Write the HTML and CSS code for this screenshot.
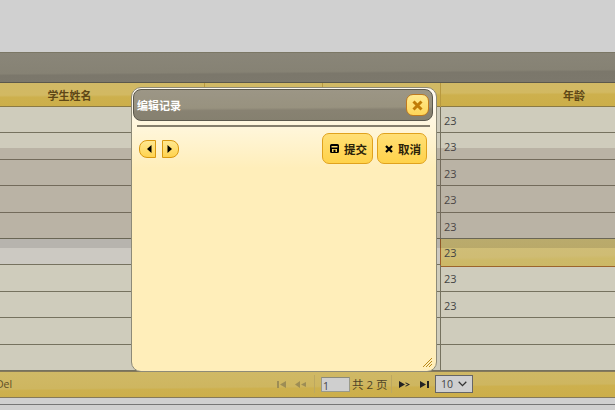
FILE: index.html
```html
<!DOCTYPE html>
<html lang="zh">
<head>
<meta charset="utf-8">
<title>编辑记录</title>
<link rel="stylesheet" href="styles.css">
</head>
<body>
<div class="page">
  <div class="caption"></div>
  <div class="grid">
    <div class="head">
      <div class="hcell name">学生姓名</div>
      <div class="hcell"></div>
      <div class="hcell"></div>
      <div class="hcell age">年龄</div>
    </div>
    <div class="row"><div></div><div></div><div></div><div class="num">23</div></div>
    <div class="row"><div></div><div></div><div></div><div class="num">23</div></div>
    <div class="row"><div></div><div></div><div></div><div class="num">23</div></div>
    <div class="row"><div></div><div></div><div></div><div class="num">23</div></div>
    <div class="row"><div></div><div></div><div></div><div class="num">23</div></div>
    <div class="row selected"><div></div><div></div><div></div><div class="num">23</div></div>
    <div class="row"><div></div><div></div><div></div><div class="num">23</div></div>
    <div class="row"><div></div><div></div><div></div><div class="num">23</div></div>
    <div class="row"><div></div><div></div><div></div><div class="num"></div></div>
    <div class="row"><div></div><div></div><div></div><div class="num"></div></div>
  </div>
  <div class="pager">
    <span class="del">Del</span>
    <div class="pgroup">
      <svg class="pico dim" width="9" height="7" viewBox="0 0 9 7"><path d="M0 0h2v7H0zM9 0v7L3 3.500z"/></svg>
      <svg class="pico dim prev" width="11" height="7" viewBox="0 0 11 7"><path d="M5 0v7L0 3.500zM11 1v5L6 3.500z"/></svg>
      <span class="sep first"></span>
      <input class="pageinput" value="1">
      <span class="ptext">共 2 页</span>
      <span class="sep"></span>
      <svg class="pico next" width="11" height="7" viewBox="0 0 11 7"><path d="M0 0l6 3.500L0 7zM6.500 1.200L11 3.500 6.500 5.800V4.800L9 3.500 6.500 2.200z"/></svg>
      <svg class="pico last" width="9" height="7" viewBox="0 0 9 7"><path d="M0 0l6 3.500L0 7zM7 0h2v7H7z"/></svg>
      <div class="select"><span>10</span>
        <svg width="9" height="6" viewBox="0 0 9 6"><path d="M.7.8l3.800 3.800L8.300.8" fill="none" stroke="#333" stroke-width="1.300"/></svg>
      </div>
    </div>
  </div>
  <div class="foot"></div>
</div>
<div class="band"></div>
<div class="band2"></div>
<div class="modal">
  <div class="mtitle">
    <span>编辑记录</span>
    <button class="close" type="button" aria-label="关闭">
      <svg width="11" height="11" viewBox="0 0 11 11"><path d="M1.500 1.500l8 8M9.500 1.500l-8 8" stroke="#c07c08" stroke-width="3"/></svg>
    </button>
  </div>
  <div class="rule"></div>
  <div class="toolbar">
    <div class="navs">
      <button class="nav left" type="button" aria-label="上一条"><svg width="5" height="8" viewBox="0 0 5 8"><path d="M4.500 0v8L0 4z"/></svg></button>
      <button class="nav right" type="button" aria-label="下一条"><svg width="5" height="8" viewBox="0 0 5 8"><path d="M.5 0v8L5 4z"/></svg></button>
    </div>
    <div class="actions">
      <button class="act submit" type="button"><svg width="9" height="9" viewBox="0 0 9 9"><path fill-rule="evenodd" d="M1.500 0h6A1.500 1.500 0 0 1 9 1.500V7.500A1.500 1.500 0 0 1 7.500 9h-6A1.500 1.500 0 0 1 0 7.500V1.500A1.500 1.500 0 0 1 1.500 0zM1.500 2v1.500h6V2zM2 5v3h1.500V5.800h2V8H7V5z"/></svg>提交</button>
      <button class="act" type="button"><svg width="8" height="8" viewBox="0 0 8 8"><path d="M1 1l6 6M7 1L1 7" stroke="#000" stroke-width="2.200"/></svg>取消</button>
    </div>
  </div>
  <svg class="grip" width="9" height="9" viewBox="0 0 9 9"><path d="M9 0L0 9M9 3L3 9M9 6L6 9" stroke="#b98a1c" stroke-width="1"/></svg>
</div>
</body>
</html>
```
FILE: styles.css
```css
html, body { margin: 0; padding: 0; }
body {
  width: 615px; height: 410px; overflow: hidden; position: relative;
  background: #d0d0d0;
  font-family: "Open Sans", "Noto Sans CJK SC", sans-serif;
  font-size: 11px; color: #444;
}
.page { padding-top: 52px; }
.caption {
  height: 29px;
  border-top: 1px solid #7b7765;
  border-bottom: 1px solid #5b584c;
  background: linear-gradient(179.600deg, #8a8679 0, #868274 62%, #7b776b 68%, #7c786c 100%);
}
.grid { width: 708px; }
.head { display: grid; grid-template-columns: 205px 118px 118px 1fr; }
.row { display: grid; grid-template-columns: 205px 118px 117px 1fr; }
.head {
  height: 24px; box-sizing: border-box;
  border-bottom: 1px solid #8b7a45;
  background: linear-gradient(179.700deg, #d1b966 0, #d2b962 46%, #cdb04d 54%, #ccae49 100%);
}
.hcell {
  border-right: 1px solid #b8993f; box-sizing: border-box;
  font-size: 11px; font-weight: 700; color: #5e4716;
  line-height: 25px; text-align: center;
}
.name { padding-right: 65px; }
.row {
  height: 26.400px; box-sizing: border-box;
  background: #cfccbc;
  border-bottom: 1px solid #76725f;
}
.num {
  border-left: 1px solid #76725f;
  padding-left: 3px;
  font-size: 11px; line-height: 27px; color: #444;
}
.selected { background: #ccc9c2; }
.selected .num {
  background: linear-gradient(179deg, #d0bf7a 0, #cfbc74 60%, #cdb968 70%, #ccb865 100%);
  border-left-color: #a0602a;
  box-shadow: 0 1px 0 #9c642c;
}
.pager {
  height: 25px; width: 615px;
  display: flex; align-items: center;
  border-top: 1px solid #85795a;
  border-bottom: 1px solid #85795a;
  background: linear-gradient(179.500deg, #d0b966 0, #ceb660 56%, #cdb04e 62%, #ccae49 100%);
  margin-bottom: 6px;
  box-sizing: content-box;
}
.del { margin-left: -4px; font-size: 10.500px; color: #5e4f26; width: 281px; }
.pgroup { display: flex; align-items: center; }
.pico { fill: #222; }
.pico.dim { fill: #9d8d55; }
.prev { margin-left: 9px; }
.sep { width: 1px; height: 18px; background: #bda860; margin: 0 7px 0 4px; }
.sep.first { margin: 0 6px 0 8px; }
.pageinput {
  width: 29px; height: 15px; box-sizing: border-box; padding: 3px 0 0 1px;
  border: 1px solid #9a9a8a; border-top-color: #8a8a7a; background: #cfcfcf;
  font: 10.500px "Open Sans", sans-serif; color: #444; margin-top: 1px;
}
.ptext { font-size: 11.500px; color: #4e4427; margin-left: 2px; width: 35px; white-space: nowrap; }
.last { margin-left: 10px; }
.select {
  margin-left: 6px; width: 38px; height: 18px; box-sizing: border-box;
  border: 1px solid #666; background: #cfcfcf;
  display: flex; align-items: center; justify-content: space-between; padding: 0 5px;
  font-size: 10.500px; color: #444;
}
.foot { border-top: 1px solid #777; }
.band {
  position: absolute; left: 0; top: 148px; width: 615px; height: 90px;
  background: rgba(107, 79, 73, .2);
}
.band2 {
  position: absolute; left: 0; top: 238px; width: 615px; height: 10px;
  background: rgba(0, 0, 0, .1);
}
.modal {
  position: absolute; left: 131px; top: 87px; width: 306px; height: 285px;
  box-sizing: border-box; padding: 1px 3px 0 1px;
  border: 1px solid #8d8a78; border-radius: 10px;
  background: linear-gradient(#fffaf0 0, #fffaf0 12px, #fff6da 40px, #ffeeba 80px, #ffeeba 100%);
}
.mtitle {
  height: 32px; box-sizing: border-box;
  display: flex; align-items: center; justify-content: space-between;
  padding: 0 3px 0 3px;
  border: 1px solid #5b584c; border-radius: 8px;
  background: linear-gradient(179.600deg, #9c9686 0, #98927f 58%, #888272 66%, #85806f 100%);
  color: #fff; font-size: 11px; font-weight: 700;
}
.close {
  width: 23px; height: 22px; padding: 0; box-sizing: border-box;
  display: flex; align-items: center; justify-content: center;
  border: 1px solid #bf7a1f; border-radius: 7px;
  background: linear-gradient(#ffe98f, #ffd659);
}
.rule { height: 2px; margin: 4px 3px 0 4px; background: #857e6c; }
.toolbar { display: flex; justify-content: space-between; margin: 6px 6px 0 6px; }
.navs { display: flex; gap: 6px; margin-top: 7px; align-items: flex-start; }
.nav {
  width: 17px; height: 18px; padding: 0; box-sizing: border-box;
  display: flex; align-items: center; justify-content: center;
  border: 1px solid #d9980f;
  background: linear-gradient(#ffe890, #ffd34f);
}
.nav.left { border-radius: 8px 0 0 8px; padding-left: 3px; }
.nav.right { border-radius: 0 8px 8px 0; padding-right: 3px; }
.actions { display: flex; gap: 4px; }
.act {
  width: 50px; height: 31px; padding: 0 0 0 2px; box-sizing: border-box;
  display: flex; align-items: center; justify-content: center; gap: 5px;
  border: 1px solid #e0a21d; border-radius: 7px;
  background: linear-gradient(#ffdf75, #ffd24a);
  font: 700 11.500px "Open Sans", "Noto Sans CJK SC", sans-serif; color: #2a2208;
}
.submit { width: 51px; }
.grip { position: absolute; right: 4px; bottom: 4px; }
```
